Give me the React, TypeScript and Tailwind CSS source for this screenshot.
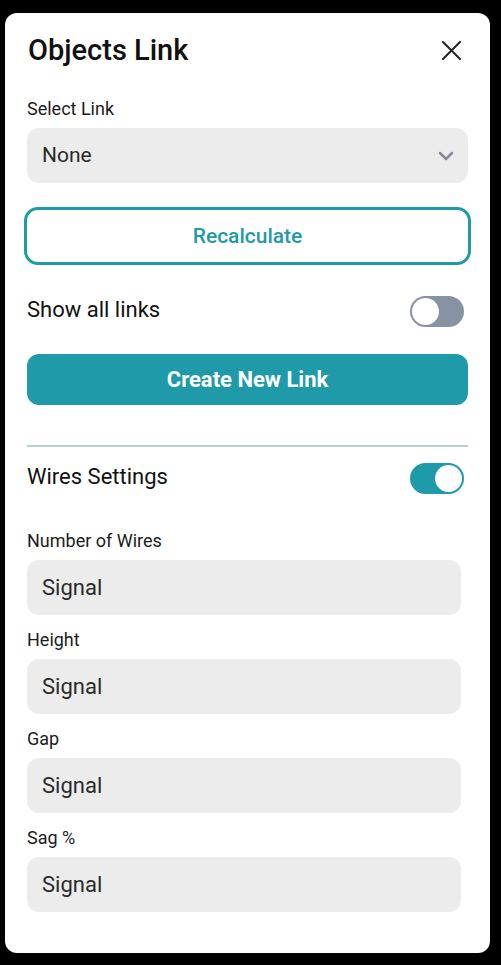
import React from "react";

function Toggle({ on }: { on: boolean }) {
  return on ? (
    <div className="w-[54px] h-[31px] rounded-full bg-[#1f9aa8] flex items-center justify-end pr-[2px]">
      <div className="w-[27px] h-[27px] rounded-full bg-white" />
    </div>
  ) : (
    <div className="w-[54px] h-[31px] rounded-full bg-[#8792a3] flex items-center pl-[2px]">
      <div className="w-[27px] h-[27px] rounded-full bg-white" />
    </div>
  );
}

function Field({ label }: { label: string }) {
  return (
    <div className="mt-[15px] first:mt-[37px]">
      <div className="h-[20px] leading-[20px] text-[18px] text-[#1c1c1c]">{label}</div>
      <div className="mt-[9px] h-[55px] w-[434px] rounded-[12px] bg-[#ececec] flex items-center pl-[15px] text-[22px] text-[#2a2a2a]">
        Signal
      </div>
    </div>
  );
}

export default function App() {
  return (
    <div className="w-[501px] h-[965px] bg-black pt-[13px] pl-[5px]" style={{ fontFamily: "Roboto, 'Noto Sans', sans-serif" }}>
      <div className="w-[485px] h-[940px] bg-white rounded-[12px] px-[22px] pt-[21px]">
        <div className="flex items-center justify-between h-[32px]">
          <div className="text-[29px] font-medium text-[#111] leading-[32px] pl-[1px]">Objects Link</div>
          <svg width="19" height="19" viewBox="0 0 19 19" className="mr-[7px]">
            <path d="M1 1 L18 18 M18 1 L1 18" stroke="#222" strokeWidth="2" strokeLinecap="round" />
          </svg>
        </div>
        <div className="mt-[33px] h-[20px] leading-[20px] text-[18px] text-[#1c1c1c]">Select Link</div>
        <div className="mt-[9px] h-[55px] rounded-[12px] bg-[#ececec] flex items-center justify-between pl-[15px] pr-[14px]">
          <span className="text-[21px] text-[#2a2a2a]">None</span>
          <svg width="16" height="10" viewBox="0 0 16 10">
            <path d="M2 2 L8 8 L14 2" stroke="#858b96" strokeWidth="2.5" fill="none" strokeLinecap="round" strokeLinejoin="round" />
          </svg>
        </div>
        <div className="mt-[24px] -mx-[3px] h-[58px] rounded-[14px] border-[3px] border-[#1f9aa8] flex items-center justify-center">
          <span className="text-[21px] font-medium text-[#1f9aa8] pt-[2px]">Recalculate</span>
        </div>
        <div className="mt-[31px] h-[31px] flex items-center justify-between">
          <span className="text-[22px] text-[#111] pb-[4px]">Show all links</span>
          <div className="mr-[4px]">
            <Toggle on={false} />
          </div>
        </div>
        <div className="mt-[27px] h-[51px] rounded-[12px] bg-[#1f9aa8] flex items-center justify-center">
          <span className="text-[22px] font-bold text-white">Create New Link</span>
        </div>
        <div className="mt-[40px] h-[2px] bg-[#b9d0d2]" />
        <div className="mt-[16px] h-[31px] flex items-center justify-between">
          <span className="text-[22px] text-[#111] pb-[5px]">Wires Settings</span>
          <div className="mr-[4px]">
            <Toggle on={true} />
          </div>
        </div>
        <div>
          <Field label="Number of Wires" />
          <Field label="Height" />
          <Field label="Gap" />
          <Field label="Sag %" />
        </div>
      </div>
    </div>
  );
}
